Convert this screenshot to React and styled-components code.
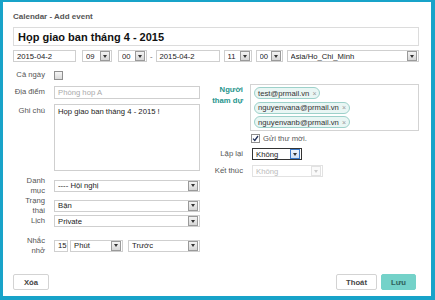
import React from "react";
import styled, { createGlobalStyle } from "styled-components";

const GlobalStyle = createGlobalStyle`
  html, body {
    margin: 0;
    padding: 0;
    background: #fff;
  }
  body {
    font-family: "Liberation Sans", Arial, sans-serif;
  }
  * {
    box-sizing: border-box;
  }
`;

const Frame = styled.div`
  width: 435px;
  height: 300px;
  border-style: solid;
  border-color: #18a3c9;
  border-width: 2px 4px 4px 3px;
  background: #fff;
  padding: 10px 12px 6px 10px;
  display: flex;
  flex-direction: column;
  font-size: 7.7px;
  color: #444;
`;

const Header = styled.div`
  font-size: 8px;
  line-height: 10px;
  font-weight: bold;
  color: #555;
`;

const TitleInput = styled.div`
  margin-top: 5px;
  height: 19px;
  border: 1px solid #dcdcdc;
  padding: 0 4px;
  display: flex;
  align-items: center;
  font-size: 11px;
  font-weight: bold;
  color: #111;
`;

const DateRow = styled.div`
  margin-top: 4px;
  height: 12px;
  display: flex;
  align-items: center;
`;

const TextBox = styled.div`
  width: ${(p) => p.$w}px;
  height: ${(p) => p.$h || 12}px;
  margin-left: ${(p) => p.$ml || 0}px;
  border: 1px solid #cfcfcf;
  background: #fff;
  padding: ${(p) => (p.$multi ? "2px 3px" : "0 3px")};
  display: flex;
  align-items: ${(p) => (p.$multi ? "flex-start" : "center")};
  color: ${(p) => (p.$placeholder ? "#aaa" : "#222")};
  white-space: nowrap;
  overflow: hidden;
  flex-shrink: 0;
`;

const Dash = styled.span`
  margin-left: 3px;
  color: #666;
`;

const SelectBox = styled.div`
  width: ${(p) => p.$w}px;
  height: 12px;
  margin-left: ${(p) => p.$ml || 0}px;
  border: 1px solid ${(p) => (p.$focused ? "#333" : p.$disabled ? "#e2e2e2" : "#cfcfcf")};
  background: #fff;
  padding: 0 1px 0 3px;
  display: flex;
  align-items: center;
  color: ${(p) => (p.$disabled ? "#bbb" : "#222")};
  white-space: nowrap;
  flex-shrink: 0;
`;

const SelectText = styled.span`
  flex: 1;
  overflow: hidden;
`;

const ArrowBtn = styled.span`
  width: 10px;
  height: 10px;
  border: 1px solid ${(p) => (p.$focused ? "#3a79c9" : p.$disabled ? "#e2e2e2" : "#9a9a9a")};
  background: ${(p) =>
    p.$focused
      ? "linear-gradient(#eef4fb, #cfe0f4)"
      : p.$disabled
      ? "#fafafa"
      : "linear-gradient(#f4f4f4, #d6d6d6)"};
  display: flex;
  align-items: center;
  justify-content: center;

  &::after {
    content: "";
    border-left: 2.5px solid transparent;
    border-right: 2.5px solid transparent;
    border-top: 3px solid ${(p) => (p.$disabled ? "#ccc" : "#333")};
  }
`;

const Body = styled.div`
  display: flex;
  gap: 11px;
`;

const Column = styled.div`
  width: ${(p) => p.$w}px;
  display: flex;
  flex-direction: column;
  padding-top: ${(p) => p.$pt || 0}px;
`;

const Row = styled.div`
  display: grid;
  grid-template-columns: 32px 1fr;
  column-gap: ${(p) => p.$gap || 9}px;
  height: ${(p) => p.$h}px;
  margin-top: ${(p) => p.$mt}px;
`;

const Label = styled.div`
  text-align: right;
  line-height: 10.5px;
  margin-top: ${(p) => (p.$mt !== undefined ? p.$mt : 1)}px;
  color: ${(p) => (p.$accent ? "#1f958d" : "#555")};
  font-weight: ${(p) => (p.$accent ? "bold" : "normal")};
`;

const Field = styled.div`
  display: flex;
  align-items: ${(p) => (p.$top ? "flex-start" : "center")};
  margin-left: ${(p) => p.$ml || 0}px;
  min-width: 0;
`;

const Check = styled.span`
  width: 9px;
  height: 9px;
  border: 1px solid #8f8f8f;
  background: ${(p) => (p.$checked ? "#fff" : "linear-gradient(#f6f6f6, #dadada)")};
  display: inline-flex;
  align-items: center;
  justify-content: center;
  flex-shrink: 0;
`;

const CheckText = styled.span`
  margin-left: 3px;
  color: #555;
`;

const TagBox = styled.div`
  width: 100%;
  height: 100%;
  border: 1px solid #d3d3d3;
  padding: 2px 3px;
  display: flex;
  flex-direction: column;
  align-items: flex-start;
  gap: 2.5px;
`;

const Tag = styled.span`
  height: 12px;
  padding: 0 3px 0 3px;
  border: 1px solid #9dd1ca;
  background: #e9f6f4;
  border-radius: 6px;
  display: inline-flex;
  align-items: center;
  color: #333;
`;

const TagClose = styled.span`
  margin-left: 3px;
  color: #999;
  font-size: 7px;
`;

const Footer = styled.div`
  margin-top: auto;
  display: flex;
  justify-content: space-between;
  padding-right: 3px;
`;

const ButtonGroup = styled.div`
  display: flex;
  gap: 4px;
`;

const Button = styled.button`
  width: ${(p) => p.$w}px;
  height: 16px;
  padding: 0;
  border: 1px solid ${(p) => (p.$primary ? "#74d2c9" : "#d3d3d3")};
  border-radius: 2px;
  background: ${(p) => (p.$primary ? "#74d2c9" : "#fff")};
  color: ${(p) => (p.$primary ? "#2f5f5b" : "#444")};
  font-family: "Liberation Sans", Arial, sans-serif;
  font-size: 7.7px;
  font-weight: bold;
`;

const Select = ({ w, ml, value, focused, disabled }) => (
  <SelectBox $w={w} $ml={ml} $focused={focused} $disabled={disabled}>
    <SelectText>{value}</SelectText>
    <ArrowBtn $focused={focused} $disabled={disabled} />
  </SelectBox>
);

const CheckMark = () => (
  <svg width="7" height="7" viewBox="0 0 7 7">
    <path d="M1 3.6 L2.8 5.4 L6 1" fill="none" stroke="#23325a" strokeWidth="1.3" />
  </svg>
);

const attendees = ["test@prmail.vn", "nguyenvana@prmail.vn", "nguyenvanb@prmail.vn"];

export default function App() {
  return (
    <>
      <GlobalStyle />
      <Frame>
        <Header>Calendar - Add event</Header>
        <TitleInput>Họp giao ban tháng 4 - 2015</TitleInput>

        <DateRow>
          <TextBox $w={63}>2015-04-2</TextBox>
          <Select w={30} ml={6} value="09" />
          <Select w={29} ml={6} value="00" />
          <Dash>-</Dash>
          <TextBox $w={64} $ml={3}>2015-04-2</TextBox>
          <Select w={28} ml={4} value="11" />
          <Select w={27} ml={4} value="00" />
          <Select w={132} ml={4} value="Asia/Ho_Chi_Minh" />
        </DateRow>

        <Body>
          <Column $w={187}>
            <Row $h={9} $mt={9}>
              <Label $mt={-1}>Cả ngày</Label>
              <Field>
                <Check />
              </Field>
            </Row>
            <Row $h={13} $mt={6}>
              <Label>Địa điểm</Label>
              <Field>
                <TextBox $w={146} $h={13} $placeholder>Phòng hop A</TextBox>
              </Field>
            </Row>
            <Row $h={67} $mt={5}>
              <Label $mt={2}>Ghi chú</Label>
              <Field $top>
                <TextBox $w={146} $h={67} $multi>Họp giao ban tháng 4 - 2015 !</TextBox>
              </Field>
            </Row>
            <Row $h={12} $mt={4}>
              <Label $mt={0.5}>Danh mục</Label>
              <Field>
                <Select w={146} value="---- Hội nghị" />
              </Field>
            </Row>
            <Row $h={12} $mt={8}>
              <Label $mt={0.5}>Trạng thái</Label>
              <Field>
                <Select w={146} value="Bận" />
              </Field>
            </Row>
            <Row $h={12} $mt={8}>
              <Label $mt={0.5}>Lịch</Label>
              <Field>
                <Select w={146} value="Private" />
              </Field>
            </Row>
            <Row $h={12} $mt={8}>
              <Label $mt={0.5}>Nhắc nhở</Label>
              <Field>
                <TextBox $w={14}>15</TextBox>
                <Select w={53} ml={2} value="Phút" />
                <Select w={72} ml={5} value="Trước" />
              </Field>
            </Row>
          </Column>

          <Column $w={208}>
            <Row $h={47} $mt={22} $gap={7}>
              <Label $accent>Người tham dự</Label>
              <Field $top>
                <TagBox>
                  {attendees.map((mail) => (
                    <Tag key={mail}>
                      {mail}
                      <TagClose>×</TagClose>
                    </Tag>
                  ))}
                </TagBox>
              </Field>
            </Row>
            <Row $h={9} $mt={3} $gap={7}>
              <span />
              <Field $ml={1}>
                <Check $checked>
                  <CheckMark />
                </Check>
                <CheckText>Gửi thư mời.</CheckText>
              </Field>
            </Row>
            <Row $h={12} $mt={5} $gap={7}>
              <Label $mt={0.5}>Lặp lại</Label>
              <Field $ml={2}>
                <Select w={50} value="Không" focused />
              </Field>
            </Row>
            <Row $h={12} $mt={5} $gap={7}>
              <Label $mt={0.5}>Kết thúc</Label>
              <Field $ml={2}>
                <Select w={71} value="Không" disabled />
              </Field>
            </Row>
          </Column>
        </Body>

        <Footer>
          <Button $w={36}>Xóa</Button>
          <ButtonGroup>
            <Button $w={41}>Thoát</Button>
            <Button $w={35} $primary>Lưu</Button>
          </ButtonGroup>
        </Footer>
      </Frame>
    </>
  );
}
